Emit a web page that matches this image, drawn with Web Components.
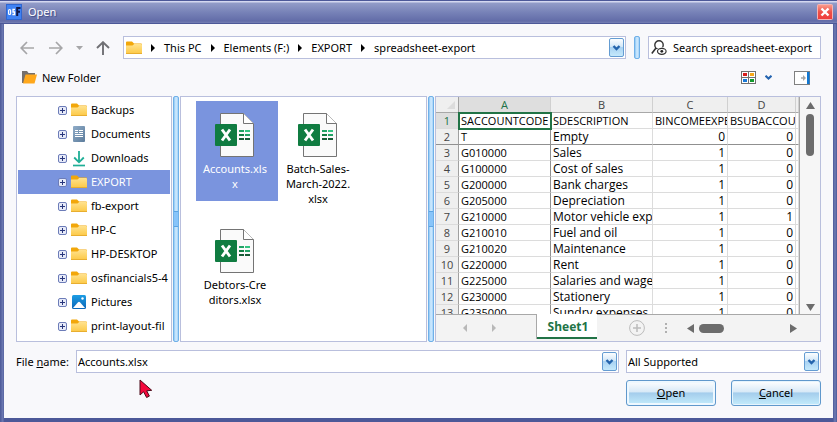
<!DOCTYPE html>
<html lang="en">
<head>
<meta charset="utf-8">
<title>Open</title>
<style>
html, body { margin: 0; height: 100%; }
body {
  --line: #b9bfdd;
  --face: #f8f8fb;
  --select: #7a94de;
  font: 11px/16px "Noto Sans", "Open Sans", sans-serif;
  color: #000;
  background: #5a66a0;
}
</style>
</head>
<body>
<open-dialog>
  <nav-bar slot="nav"></nav-bar>
  <tool-bar slot="tools">New Folder</tool-bar>
  <folder-tree slot="tree">
    <tree-row icon="folder">Backups</tree-row>
    <tree-row icon="documents">Documents</tree-row>
    <tree-row icon="downloads">Downloads</tree-row>
    <tree-row icon="folder" selected>EXPORT</tree-row>
    <tree-row icon="folder">fb-export</tree-row>
    <tree-row icon="folder">HP-C</tree-row>
    <tree-row icon="folder">HP-DESKTOP</tree-row>
    <tree-row icon="folder">osfinancials5-4</tree-row>
    <tree-row icon="pictures">Pictures</tree-row>
    <tree-row icon="folder">print-layout-fil</tree-row>
  </folder-tree>
  <file-list slot="files">
    <file-item selected>Accounts.xls<br>x</file-item>
    <file-item>Batch-Sales-<br>March-2022.<br>xlsx</file-item>
    <file-item>Debtors-Cre<br>ditors.xlsx</file-item>
  </file-list>
  <sheet-preview slot="preview"></sheet-preview>
  <file-form slot="form"></file-form>
</open-dialog>

<script>
const base = `
  * { box-sizing: border-box; }
  button, input, select { font: inherit; color: inherit; margin: 0; padding: 0; border: 0; background: none; border-radius: 0; text-align: inherit; }
  ul, ol { margin: 0; padding: 0; list-style: none; }
  a { color: inherit; text-decoration: none; }
`;
function define(name, html, setup) {
  const template = document.createElement('template');
  template.innerHTML = html;
  customElements.define(name, class extends HTMLElement {
    constructor() {
      super();
      this.attachShadow({ mode: 'open' }).append(template.content.cloneNode(true));
    }
    connectedCallback() { if (setup) setup(this, this.shadowRoot); }
  });
}

const icons = {
  app: [16, 16, `<rect width="16" height="16" fill="#3f82f4"/><rect x=".5" y=".5" width="15" height="15" fill="none" stroke="#2f66d0"/>
    <rect x="2.600" y="5.500" width="2" height="5" rx="1" fill="none" stroke="#fff" stroke-width="1.2"/><path d="M9 5.500H7V8H8.600v2.500H6.400" fill="none" stroke="#fff" stroke-width="1.3"/>
    <path d="M11.200 12V4H14.500M11.200 7.800h2.800" fill="none" stroke="#101848" stroke-width="2"/>`],
  close: [16, 16, `<defs><linearGradient id="g" x2="0" y2="1"><stop stop-color="#f9a090"/><stop offset=".5" stop-color="#ee5048"/><stop offset="1" stop-color="#f03c3c"/></linearGradient></defs>
    <rect x=".5" y=".5" width="15" height="15" rx="1" fill="url(#g)" stroke="#f4b4b4"/><path d="M4.500 4.500l7 7M11.500 4.500l-7 7" stroke="#fff" stroke-width="2.400"/>`],
  back: [14, 14, `<path d="M14 7H1.500M7 1L1.200 7 7 13" fill="none" stroke="#a6a6a8" stroke-width="1.700"/>`],
  forward: [14, 14, `<path d="M0 7h12.500M7 1l5.800 6L7 13" fill="none" stroke="#a6a6a8" stroke-width="1.700"/>`],
  recent: [7, 4, `<path d="M0 0h7L3.500 4z" fill="#a6a6a8"/>`],
  up: [14, 14, `<path d="M7 14V1.500M1 7l6-5.800L13 7" fill="none" stroke="#707074" stroke-width="1.900"/>`],
  folder: [16, 14, `<defs><linearGradient id="g" x2="0" y2="1"><stop stop-color="#ffe28e"/><stop offset="1" stop-color="#fcc844"/></linearGradient></defs>
    <path d="M0 1.500Q0 .5 1 .5h5l2 2h7q1 0 1 1V6H0z" fill="#f2a70a"/><path d="M0 4.500h6.500l1.700-1.500H15q1 0 1 1v8q0 1-1 1H1q-1 0-1-1z" fill="url(#g)"/><path d="M0 12.500h16" stroke="#e8ae30"/>`],
  newfolder: [15, 13, `<path d="M0 12V0h5l1.500 2H13v3H4L2 12z" fill="#75706c"/><path d="M3.500 3.500H15L12.500 12.500H1z" fill="#ffa81c"/>`],
  documents: [12, 16, `<defs><linearGradient id="g" x2="1" y2="1"><stop stop-color="#90acc8"/><stop offset="1" stop-color="#5c7c9c"/></linearGradient></defs>
    <rect width="12" height="16" rx="1" fill="url(#g)"/><path d="M2 4.500h3M2 6.500h3M6 4.500h4M6 6.500h4M2 8.500h8M2 10.500h8" stroke="#fff"/>`],
  downloads: [14, 17, `<path d="M7 1v11M2.200 7.500L7 12.300l4.800-4.800" fill="none" stroke="#1fae96" stroke-width="1.800"/><path d="M1 15.500h12" stroke="#1fae96" stroke-width="1.700"/>`],
  pictures: [14, 14, `<defs><linearGradient id="g" x2="0" y2="1"><stop stop-color="#1c9de4"/><stop offset="1" stop-color="#0a66b8"/></linearGradient></defs>
    <rect width="14" height="14" rx="1.500" fill="url(#g)"/><path d="M1 13L6 7.300q1-1 2 0L13 13z" fill="#fff"/><circle cx="10.500" cy="3.500" r="1.200" fill="#fff"/>`],
  plus: [9, 9, `<rect x=".5" y=".5" width="8" height="8" rx="1.500" fill="#e6eaf8" stroke="#6c7cb8"/><path d="M2 4.500h5M4.500 2v5" stroke="#28367c"/>`],
  crumb: [4, 8, `<path d="M0 0l4 4-4 4z" fill="#000"/>`],
  drop: [15, 19, `<defs><linearGradient id="g" x2="0" y2="1"><stop stop-color="#fff"/><stop offset=".45" stop-color="#d3e8f8"/><stop offset=".5" stop-color="#a9d2f2"/><stop offset="1" stop-color="#c6eafc"/></linearGradient></defs>
    <rect x=".5" y=".5" width="14" height="18" rx="1.500" fill="url(#g)" stroke="#649cd2"/><path d="M4.500 8l3 3 3-3" fill="none" stroke="#2464ac" stroke-width="2.400"/>`],
  chevron: [7, 5, `<path d="M.5 .800l3 2.700 3-2.700" fill="none" stroke="#2464b0" stroke-width="2.200"/>`],
  search: [16, 15, `<circle cx="8" cy="5" r="4.200" fill="none" stroke="#333" stroke-width="1.400"/><path d="M5 8L.8 13.500" stroke="#333" stroke-width="1.600"/>
    <ellipse cx="10.800" cy="11.300" rx="5.600" ry="4" fill="#fff"/><ellipse cx="10.800" cy="11.300" rx="4.300" ry="3" fill="none" stroke="#333" stroke-width="1.200"/><circle cx="10.800" cy="11.300" r="1.400" fill="#222"/>`],
  views: [15, 13, `<rect x=".5" y=".5" width="14" height="12" fill="#fff" stroke="#707070"/><path d="M7.500 0v13M0 6.500h15" stroke="#707070"/>
    <path d="M2 2h4v3H2z" fill="#d81e1e"/><path d="M9 2h4v3H9z" fill="#f8a818"/><path d="M2 8h4v3H2z" fill="#1878d8"/><path d="M9 8h4v3H9z" fill="#129a2c"/>`],
  pane: [16, 14, `<rect x=".5" y=".5" width="15" height="13" fill="#fff" stroke="#808080"/><path d="M13 1h2.500v12H13z" fill="#1078d4"/><path d="M7 7h2.500" stroke="#a4a4a4" stroke-width="1.500"/><path d="M9 4l3 3-3 3z" fill="#a4a4a4"/>`],
  excel: [40, 44, `<path d="M5.500.5h23l10 10v33h-33z" fill="#fafafa" stroke="#747474"/><path d="M28.500.5v10h10" fill="#fff" stroke="#747474"/>
    <rect y="11" width="22" height="22" rx="1" fill="#107c41"/><path d="M7 16.500l8 11M15 16.500l-8 11" stroke="#fff" stroke-width="2.900"/>
    <path d="M24 18h5" stroke="#21a366" stroke-width="2"/><path d="M30 18h5" stroke="#33c481" stroke-width="2"/><path d="M24 22h5" stroke="#107c41" stroke-width="2"/><path d="M30 22h5" stroke="#21a366" stroke-width="2"/><path d="M24 26h5M30 26h5" stroke="#185c37" stroke-width="2"/>`],
  corner: [8, 8, `<path d="M8 0v8H0z" fill="#dcdcdc"/>`],
  left: [7, 9, `<path d="M7 0v9L0 4.500z" fill="currentColor"/>`],
  right: [7, 9, `<path d="M0 0v9l7-4.500z" fill="currentColor"/>`],
  prev: [4, 8, `<path d="M4 0v8L0 4z" fill="currentColor"/>`],
  next: [4, 8, `<path d="M0 0v8l4-4z" fill="currentColor"/>`],
  top: [9, 7, `<path d="M0 7h9L4.500 0z" fill="currentColor"/>`],
  bottom: [9, 7, `<path d="M0 0h9L4.500 7z" fill="currentColor"/>`],
  add: [16, 16, `<circle cx="8" cy="8" r="7.400" fill="none" stroke="#bcbcbc"/><path d="M8 4v8M4 8h8" stroke="#bcbcbc" stroke-width="1.500"/>`],
  dots: [2, 10, `<path d="M0 0h2v2H0zM0 4h2v2H0zM0 8h2v2H0z" fill="#b0b0b0"/>`],
  pointer: [14, 20, `<path d="M1 1v15l3.600-3.200 3 5.700 2.800-1.400-2.700-5.300 5-.5z" fill="#f5083c" stroke="#4a0a18"/>`]
};
define('ui-icon', `<style>:host { display: inline-flex; flex: none; } svg { display: block; }</style><span></span>`, (el, root) => {
  const [w, h, body] = icons[el.getAttribute('name')];
  root.querySelector('span').innerHTML = `<svg width="${w}" height="${h}" viewBox="0 0 ${w} ${h}" aria-hidden="true">${body}</svg>`;
});

define('split-bar', `<style>
  :host { display: block; width: 6px; border: 1px solid #6fb0e8; border-radius: 2px; background: linear-gradient(90deg, #8cc6f4, #d4ecff 50%, #a4d2f8); box-sizing: border-box; }
  :host([grip]) { display: flex; align-items: center; }
  i { display: none; width: 4px; height: 16px; background: #88c4fa; border: solid #5ca4e4; border-width: 1px 0; box-sizing: border-box; }
  :host([grip]) i { display: block; }
</style><i></i>`);

define('open-dialog', `<style>${base}
  :host { display: flex; flex-direction: column; min-height: 100%; height: 100%; box-sizing: border-box; padding: 0 4px 4px; position: relative;
    background: linear-gradient(90deg, #4c5898, #6f7cb4 3px, #4c5898 4px, #4c5898 calc(100% - 4px), #6f7cb4 calc(100% - 2px), #4c5898); }
  header { display: flex; align-items: center; gap: 6px; height: 24px; flex: none; margin: 0 -4px; padding: 0 4px 0 6px; color: #fff;
    border: solid #4c5898; border-width: 1px 0; background: linear-gradient(#d4d8f0 1px, #929cc8 2px, #7883b8 11px, #626ca8 20px, #7580b4); text-shadow: 1px 1px 1px #404c84; }
  h1 { flex: 1; margin: 0; font: inherit; }
  header button { display: flex; }
  main { flex: 1; min-height: 0; display: flex; flex-direction: column; background: var(--face); padding: 12px; }
  .panes { flex: 1; min-height: 0; display: grid; grid-template-columns: 156fr 6px 247fr 6px 386fr; grid-template-rows: minmax(0, 1fr); column-gap: 1px; }
  ::slotted(*) { min-width: 0; min-height: 0; }
  .pointer { position: absolute; left: 139px; top: 379px; }
</style>
<header><ui-icon name="app"></ui-icon><h1>Open</h1><button aria-label="Close"><ui-icon name="close"></ui-icon></button></header>
<main>
  <slot name="nav"></slot>
  <slot name="tools"></slot>
  <div class="panes">
    <slot name="tree"></slot><split-bar grip></split-bar><slot name="files"></slot><split-bar grip></split-bar><slot name="preview"></slot>
  </div>
  <slot name="form"></slot>
</main>
<ui-icon class="pointer" name="pointer"></ui-icon>`);

define('nav-bar', `<style>${base}
  :host { display: flex; align-items: stretch; height: 23px; gap: 8px; flex: none; }
  .history { display: flex; align-items: center; gap: 13px; padding: 0 5px 0 4px; }
  .history button { display: flex; }
  .history .step { margin-right: 2px; }
  nav { flex: 1; min-width: 0; display: flex; align-items: center; border: 1px solid var(--line); background: #fff; padding: 0 1px 0 2px; }
  ol { flex: 1; display: flex; align-items: center; white-space: nowrap; overflow: hidden; }
  li { display: flex; align-items: center; gap: 9px; padding-left: 9px; }
  nav button { display: flex; }
  label { width: 173px; display: flex; align-items: center; gap: 6px; border: 1px solid var(--line); background: #fff; padding: 0 2px; }
  input { flex: 1; min-width: 0; outline: none; }
  input::placeholder { color: #000; opacity: 1; }
</style>
<div class="history">
  <button class="step" aria-label="Back"><ui-icon name="back"></ui-icon></button>
  <button aria-label="Forward"><ui-icon name="forward"></ui-icon></button>
  <button aria-label="Recent locations"><ui-icon name="recent"></ui-icon></button>
  <button aria-label="Up"><ui-icon name="up"></ui-icon></button>
</div>
<nav aria-label="Address">
  <ui-icon name="folder"></ui-icon>
  <ol>
    <li><ui-icon name="crumb"></ui-icon><a href="#pc">This PC</a></li>
    <li><ui-icon name="crumb"></ui-icon><a href="#f">Elements (F:)</a></li>
    <li><ui-icon name="crumb"></ui-icon><a href="#export">EXPORT</a></li>
    <li><ui-icon name="crumb"></ui-icon><a href="#spreadsheet">spreadsheet-export</a></li>
  </ol>
  <button aria-label="Previous locations"><ui-icon name="drop"></ui-icon></button>
</nav>
<split-bar></split-bar>
<label><ui-icon name="search"></ui-icon><input type="text" aria-label="Search" placeholder="Search spreadsheet-export"></label>`);

define('tool-bar', `<style>${base}
  :host { display: flex; align-items: center; justify-content: space-between; height: 37px; flex: none; padding: 0 11px 0 6px; box-sizing: border-box; }
  div { display: flex; align-items: center; }
  button { display: flex; align-items: center; gap: 5px; }
  .views { gap: 9px; margin-right: 22px; }
</style>
<button><ui-icon name="newfolder"></ui-icon><slot></slot></button>
<div><button class="views" aria-label="Change view"><ui-icon name="views"></ui-icon><ui-icon name="chevron"></ui-icon></button>
<button aria-label="Toggle preview pane"><ui-icon name="pane"></ui-icon></button></div>`);

define('folder-tree', `<style>
  :host { display: block; border: 1px solid var(--line); background: #fff; padding: 1px; overflow: hidden; box-sizing: border-box; }
</style><div role="tree" aria-label="Folders"><slot></slot></div>`);

define('tree-row', `<style>${base}
  :host { display: flex; align-items: center; height: 24px; padding-left: 40px; gap: 3px; white-space: nowrap; overflow: hidden; }
  :host([selected]) { background: var(--select); color: #fff; }
  button { display: flex; flex: none; }
  .icon { display: flex; flex: none; width: 18px; justify-content: center; }
  .name { flex: none; }
</style><button aria-label="Expand"><ui-icon name="plus"></ui-icon></button><span class="icon"></span><span class="name"><slot></slot></span>`, (el, root) => {
  el.setAttribute('role', 'treeitem');
  root.querySelector('.icon').innerHTML = `<ui-icon name="${el.getAttribute('icon')}"></ui-icon>`;
});

define('file-list', `<style>
  :host { display: flex; flex-wrap: wrap; align-content: flex-start; column-gap: 1px; row-gap: 16px; padding: 4px 15px; border: 1px solid var(--line); background: #fff; overflow: hidden; box-sizing: border-box; }
</style><slot></slot>`);
define('file-item', `<style>${base}
  :host { display: block; width: 82px; }
  button { display: flex; flex-direction: column; align-items: center; gap: 4px; width: 100%; height: 100px; padding: 12px 4px 0 0; line-height: 15px; text-align: center; white-space: nowrap; }
  :host([selected]) button { background: var(--select); color: #fff; }
</style><button><ui-icon name="excel"></ui-icon><span><slot></slot></span></button>`);

const rows = [
  ['SACCOUNTCODE', 'SDESCRIPTION', 'BINCOMEEXPE', 'BSUBACCOU'], ['T', 'Empty', 0, 0], ['G010000', 'Sales', 1, 0],
  ['G100000', 'Cost of sales', 1, 0], ['G200000', 'Bank charges', 1, 0], ['G205000', 'Depreciation', 1, 0],
  ['G210000', 'Motor vehicle expe', 1, 1], ['G210010', 'Fuel and oil', 1, 0], ['G210020', 'Maintenance', 1, 0],
  ['G220000', 'Rent', 1, 0], ['G225000', 'Salaries and wage', 1, 0], ['G230000', 'Stationery', 1, 0], ['G235000', 'Sundry expenses', 1, 0]
];
define('sheet-preview', `<style>${base}
  :host { display: flex; flex-direction: column; border: 1px solid var(--line); background: #f3f3f3; overflow: hidden; box-sizing: border-box; }
  .top { flex: 1; min-height: 0; display: flex; }
  .grid { flex: 1; min-width: 0; overflow: hidden; background: #fff; border-right: 1px solid #a8a8a8; }
  table { table-layout: fixed; border-collapse: separate; border-spacing: 0; width: 100%; font-size: 12px; font-family: "Open Sans", "Noto Sans", sans-serif; }
  th, td { height: 16px; padding: 0 0 0 2px; line-height: 15px; font-weight: 400; text-align: left; white-space: nowrap; overflow: hidden; border: solid #dcdcdc; border-width: 0 1px 1px 0; }
  th { font-size: 11px; background: #efefef; color: #444; text-align: center; border-right-color: #d0d0d0; padding: 0; }
  thead th { border-bottom-color: #a8a8a8; }
  thead th:first-child { text-align: right; padding-right: 3px; }
  thead ui-icon { vertical-align: top; padding-top: 4px; }
  th:first-child { border-right-color: #a0a0a0; }
  td:nth-child(n+4) { text-align: right; padding-right: 2px; }
  tbody tr:first-child td { text-align: left; font-size: 11px; padding-right: 0; }
  td:nth-child(2) { border-right-color: #909090; font-size: 11px; }
  tbody tr:nth-child(2) > * { border-bottom-color: #909090; }
  th.on { background: #dedede; color: #217346; }
  td.on { outline: 2px solid #217346; outline-offset: -1px; }
  .vbar { width: 20px; display: flex; flex-direction: column; align-items: center; gap: 5px; padding: 5px 0 3px; color: #6c6c6c; background: #f6f6f6; }
  .vbar i { width: 8px; height: 42px; border-radius: 4px; background: #6c6c6c; margin-bottom: auto; }
  footer { display: flex; align-items: center; height: 27px; flex: none; border-top: 1px solid #a8a8a8; color: #6c6c6c; }
  footer button { display: flex; }
  .prev, .next { color: #b8b8b8; }
  .prev { margin: 0 25px 0 27px; }
  .tab { align-self: flex-start; height: 25px; width: 61px; margin: -1px 32px 0 40px; padding-left: 2px; justify-content: center; align-items: center; background: #fff; color: #217346; font-weight: 700; font-size: 12px; border: solid #a8a8a8; border-width: 0 0 0 1px; box-shadow: inset 0 -2px #217346; }
  .dots { padding: 0 20px; }
  .hbar { flex: 1; min-width: 0; display: flex; align-items: center; gap: 5px; margin-right: 23px; }
  .hbar i { width: 25px; height: 9px; border-radius: 5px; background: #6c6c6c; margin-right: auto; }
</style>
<div class="top">
  <div class="grid"><table aria-label="Sheet1">
    <colgroup><col style="width:23px"><col style="width:92px"><col style="width:102px"><col style="width:75px"><col style="width:68px"><col></colgroup>
    <thead><tr><th><ui-icon name="corner"></ui-icon></th><th class="on">A</th><th>B</th><th>C</th><th>D</th><th></th></tr></thead><tbody></tbody>
  </table></div>
  <div class="vbar"><ui-icon name="top"></ui-icon><i></i><ui-icon name="bottom"></ui-icon></div>
</div>
<footer>
  <button class="prev" aria-label="Previous sheet"><ui-icon name="prev"></ui-icon></button>
  <button class="next" aria-label="Next sheet"><ui-icon name="next"></ui-icon></button>
  <button class="tab">Sheet1</button>
  <button aria-label="New sheet"><ui-icon name="add"></ui-icon></button>
  <ui-icon class="dots" name="dots"></ui-icon>
  <div class="hbar"><ui-icon name="left"></ui-icon><i></i><ui-icon name="right"></ui-icon></div>
</footer>`, (el, root) => {
  root.querySelector('tbody').innerHTML = rows.map((r, i) =>
    `<tr><th class="${i ? '' : 'on'}">${i + 1}</th>${r.map((c, j) => `<td class="${i || j ? '' : 'on'}">${c}</td>`).join('')}<td></td></tr>`).join('');
});

define('file-form', `<style>${base}
  :host { display: block; flex: none; padding-top: 8px; }
  .row { display: flex; align-items: center; height: 23px; }
  label { width: 60px; }
  .field { display: flex; align-items: center; height: 23px; border: 1px solid var(--line); background: #fff; padding: 0 1px; }
  .name { flex: 1; min-width: 0; margin-right: 7px; }
  .type { width: 195px; }
  .field button { display: flex; }
  input, select { flex: 1; min-width: 0; height: 21px; outline: none; appearance: none; }
  .type ui-icon { pointer-events: none; }
  .actions { display: flex; justify-content: flex-end; gap: 15px; margin-top: 7px; }
  .actions button { width: 90px; height: 26px; text-align: center; border: 1px solid #6098cc; border-radius: 3px;
    background: linear-gradient(#fff, #d8e9f7 45%, #a4cdec 50%, #c4ecfc); box-shadow: inset 0 0 0 1px #e6f4fd; }
  .actions .ok { box-shadow: inset 0 0 0 2px #eef8ff; }
</style>
<div class="row">
  <label for="name">File <u>n</u>ame:</label>
  <div class="field name"><input id="name" type="text" value="Accounts.xlsx"><button aria-label="Recent names"><ui-icon name="drop"></ui-icon></button></div>
  <div class="field type"><select aria-label="File type"><option>All Supported</option></select><ui-icon name="drop"></ui-icon></div>
</div>
<div class="actions"><button class="ok"><u>O</u>pen</button><button><u>C</u>ancel</button></div>`);
</script>
</body>
</html>
